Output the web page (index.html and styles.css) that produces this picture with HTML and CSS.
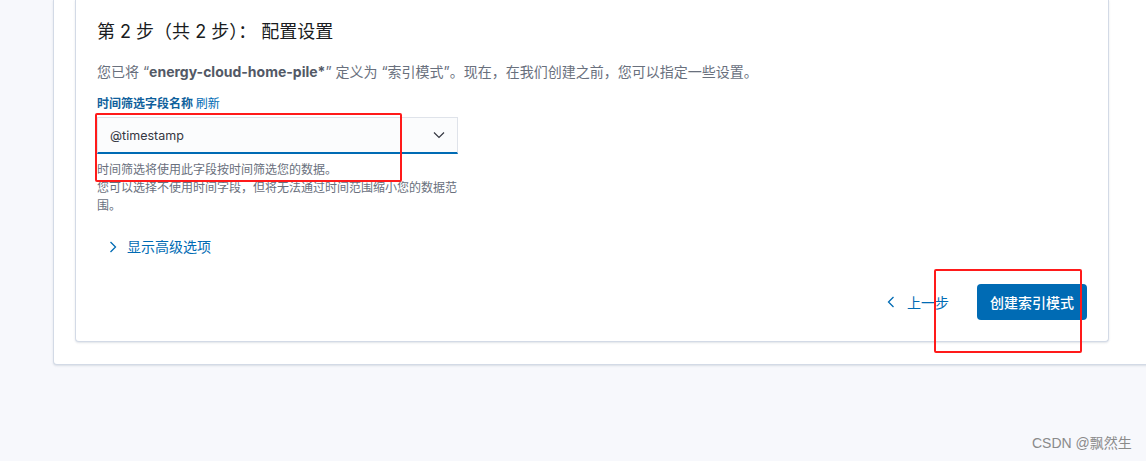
FILE: index.html
```html
<!DOCTYPE html>
<html lang="zh-CN">
<head>
    <meta charset="UTF-8">
    <meta name="viewport" content="width=device-width, initial-scale=1.0">
    <title>创建索引模式</title>
    <link rel="stylesheet" href="styles.css">
</head>
<body>
<div class="page-panel">
    <div class="step-panel">
        <h2 class="step-title">第 2 步（共 2 步）： 配置设置</h2>
        <p class="step-desc">您已将 “<b>energy-cloud-home-pile*</b>” 定义为 “索引模式”。现在，在我们创建之前，您可以指定一些设置。</p>

        <div class="field">
            <div class="field-label">时间筛选字段名称 <a class="link">刷新</a></div>
            <div class="select">
                <span>@timestamp</span>
                <svg width="12" height="8" viewBox="0 0 12 8"><path d="M1 1.5l5 5 5-5" fill="none" stroke="#343741" stroke-width="1.2"/></svg>
            </div>
            <div class="field-help">
                <div>时间筛选将使用此字段按时间筛选您的数据。</div>
                <div>您可以选择不使用时间字段，但将无法通过时间范围缩小您的数据范围。</div>
            </div>
        </div>

        <div class="advanced">
            <svg width="8" height="12" viewBox="0 0 8 12"><path d="M1.5 1l5 5-5 5" fill="none" stroke="#006bb4" stroke-width="1.3"/></svg>
            <span>显示高级选项</span>
        </div>

        <div class="step-footer">
            <a class="back-link">
                <svg width="8" height="12" viewBox="0 0 8 12"><path d="M6.5 1l-5 5 5 5" fill="none" stroke="#006bb4" stroke-width="1.3"/></svg>
                <span>上一步</span>
            </a>
            <button class="primary-btn">创建索引模式</button>
        </div>
    </div>
</div>

<!-- annotations drawn on the screenshot -->
<div class="mark mark-select"></div>
<div class="mark mark-button"></div>
<div class="watermark">CSDN @飘然生</div>
</body>
</html>
```

FILE: styles.css
```css
body {
    margin: 0;
    background: #f7f8fc;
    font-family: Inter, "Noto Sans CJK SC", sans-serif;
    color: #1a1c21;
    height: 461px;
    overflow: hidden;
    position: relative;
}
.page-panel {
    margin-left: 53px;
    width: 1055px;
    padding: 0 23px 22px 21px;
    background: #fff;
    border: 1px solid #d3dae6;
    border-top: none;
    border-radius: 0 0 4px 4px;
    box-shadow: 0 1px 2px rgba(152, 162, 179, 0.3);
}
.step-panel {
    width: 990px;
    padding: 20px 21px 21px 21px;
    background: #fff;
    border: 1px solid #d3dae6;
    border-top: none;
    border-radius: 0 0 4px 4px;
    box-shadow: 0 1px 2px rgba(152, 162, 179, 0.3);
}
.step-title {
    margin: 0;
    font-size: 18px;
    line-height: 24px;
    font-weight: 400;
    color: #1a1c21;
}
.step-desc {
    margin: 18px 0 0;
    font-size: 14px;
    line-height: 20px;
    color: #69707d;
}
.step-desc b {
    color: #535966;
}
.field {
    margin-top: 14px;
    width: 361px;
}
.field-label {
    font-size: 12px;
    line-height: 16px;
    font-weight: 700;
    color: #0f5f9c;
}
.field-label .link {
    font-weight: 400;
    color: #006bb4;
}
.select {
    margin-top: 5px;
    height: 34px;
    display: flex;
    align-items: center;
    justify-content: space-between;
    padding: 0 12px;
    background: #fbfcfd;
    border: 1px solid #dfe3ea;
    border-bottom: 2px solid #006bb4;
    box-sizing: content-box;
    width: 335px;
    font-size: 12.5px;
    color: #343741;
}
.field-help {
    margin-top: 7px;
    font-size: 12px;
    line-height: 18px;
    color: #69707d;
}
.advanced {
    margin-top: 22px;
    display: flex;
    align-items: center;
    gap: 10px;
    padding-left: 12px;
    font-size: 14px;
    line-height: 20px;
    color: #006bb4;
}
.step-footer {
    margin-top: 27px;
    display: flex;
    justify-content: flex-end;
    align-items: center;
    gap: 28px;
}
.back-link {
    display: flex;
    align-items: center;
    gap: 12px;
    font-size: 14px;
    color: #006bb4;
}
.primary-btn {
    height: 36px;
    padding: 0 13px;
    border: none;
    border-radius: 4px;
    background: #006bb4;
    color: #fff;
    font-family: inherit;
    font-size: 14px;
    font-weight: 500;
}
.mark {
    position: absolute;
    border: 2px solid #ff1a1a;
    border-radius: 2px;
}
.mark-select {
    left: 95px;
    top: 113px;
    width: 303px;
    height: 65px;
}
.mark-button {
    left: 934px;
    top: 269px;
    width: 144px;
    height: 80px;
}
.watermark {
    position: absolute;
    left: 1032px;
    top: 434px;
    font-size: 14px;
    line-height: 18px;
    color: #8a8a8a;
    font-family: "Liberation Sans", "Noto Sans CJK SC", sans-serif;
}
```
